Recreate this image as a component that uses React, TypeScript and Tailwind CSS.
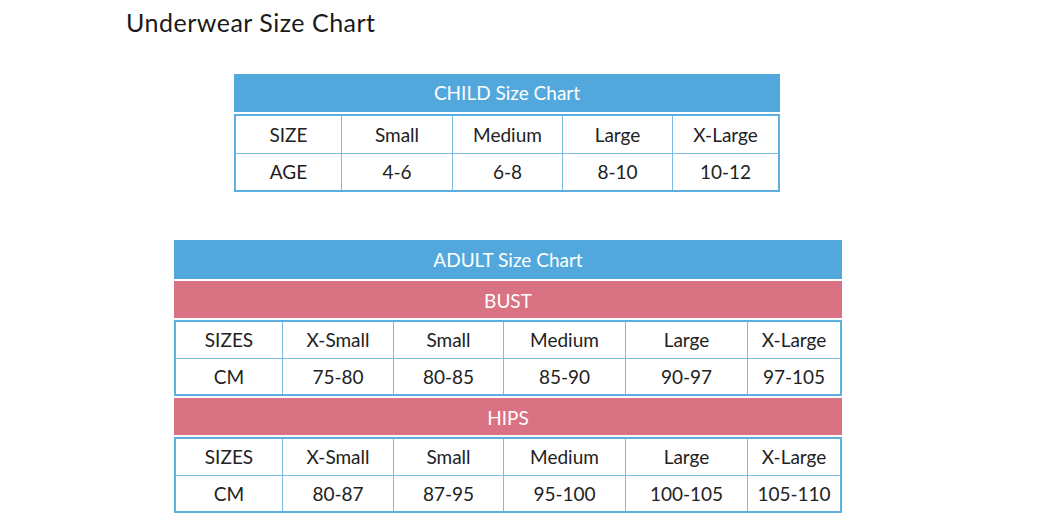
const childCols = ["SIZE", "Small", "Medium", "Large", "X-Large"];
const childAges = ["AGE", "4-6", "6-8", "8-10", "10-12"];

const adultSizes = ["SIZES", "X-Small", "Small", "Medium", "Large", "X-Large"];
const bustCm = ["CM", "75-80", "80-85", "85-90", "90-97", "97-105"];
const hipsCm = ["CM", "80-87", "87-95", "95-100", "100-105", "105-110"];

// one row of cells; the grid parent places them
function Row({ cells, top, rowH }: { cells: string[]; top?: boolean; rowH: string }) {
  return (
    <>
      {cells.map((c, i) => (
        <div
          key={i}
          className={`flex ${rowH} items-center justify-center pt-[1px] text-[19px] text-[#222] ${
            i > 0 ? "border-l-[1.5px] border-l-[#7cbde6]" : ""
          } ${top ? "border-t-[1.5px] border-t-[#7cbde6]" : ""}`}
        >
          {c}
        </div>
      ))}
    </>
  );
}

function Grid({ rows, cols, rowH }: { rows: string[][]; cols: string; rowH: string }) {
  return (
    <div className={`mt-[2px] grid border-2 border-[#5eaee0] bg-white ${cols}`}>
      {rows.map((r, i) => (
        <Row key={i} cells={r} top={i > 0} rowH={rowH} />
      ))}
    </div>
  );
}

export default function App() {
  return (
    <div
      className="h-[520px] w-full bg-white"
      style={{ fontFamily: "Lato, 'Open Sans', sans-serif" }}
    >
      <h1 className="pl-[126px] pt-[7px] text-[25px] font-normal leading-[30px] tracking-[0.5px] text-[#1a1a1a]">
        Underwear Size Chart
      </h1>

      <div className="ml-[234px] mt-[37px] w-[546px]">
        <div className="flex h-[38px] items-center justify-center pt-[1px] text-[19px] text-white bg-[#52a8dc]">
          CHILD Size Chart
        </div>
        <Grid
          rows={[childCols, childAges]}
          cols="grid-cols-[105px_111px_110px_110px_106px]"
          rowH="h-[37px]"
        />
      </div>

      <div className="ml-[174px] mt-[48px] w-[668px]">
        <div className="flex h-[39px] items-center justify-center pt-[1px] text-[19px] text-white bg-[#52a8dc]">
          ADULT Size Chart
        </div>
        <div className="mt-[2px] flex h-[37px] items-center justify-center pt-[4px] text-[19px] text-white bg-[#d97282]">
          BUST
        </div>
        <Grid
          rows={[adultSizes, bustCm]}
          cols="grid-cols-[106px_111px_110px_122px_122px_93px]"
          rowH="h-[36px]"
        />
        <div className="mt-[2px] flex h-[37px] items-center justify-center pt-[3px] text-[19px] text-white bg-[#d97282]">
          HIPS
        </div>
        <Grid
          rows={[adultSizes, hipsCm]}
          cols="grid-cols-[106px_111px_110px_122px_122px_93px]"
          rowH="h-[36px]"
        />
      </div>
    </div>
  );
}
